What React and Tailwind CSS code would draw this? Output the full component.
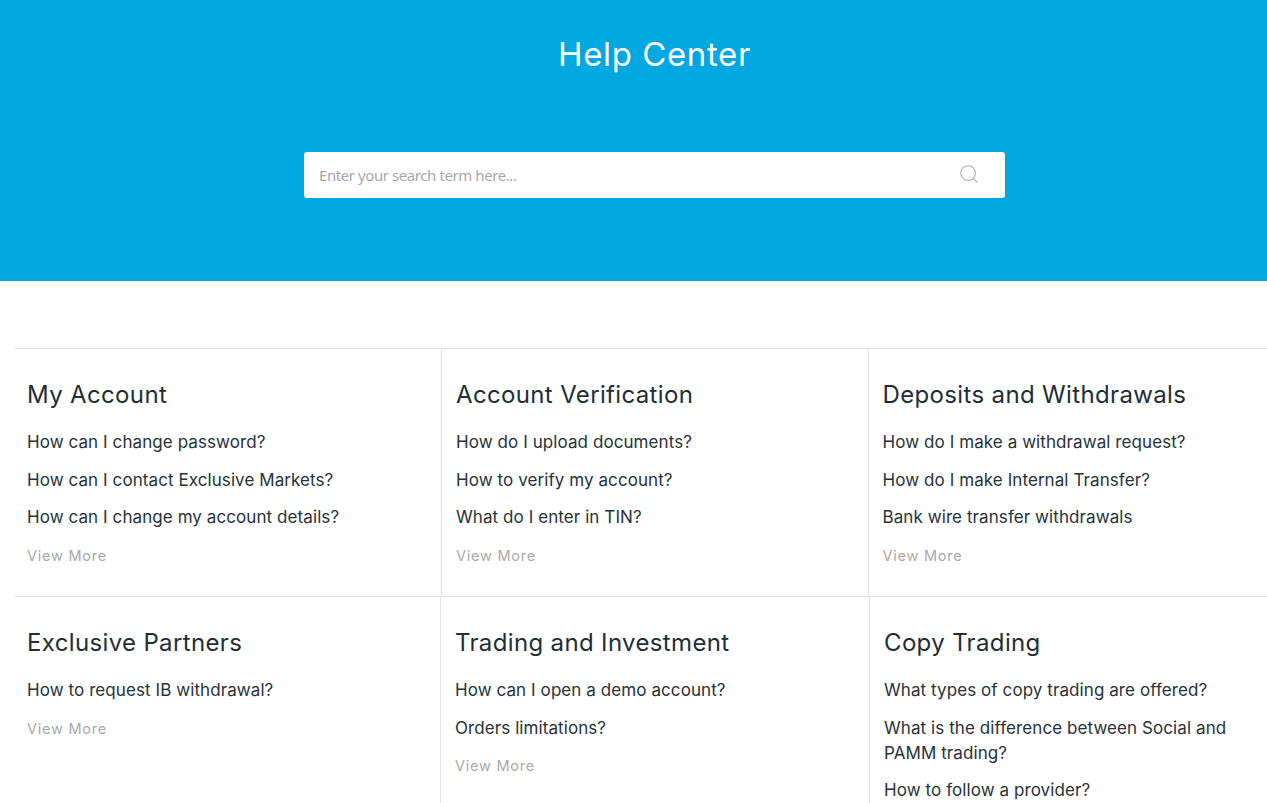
import { Search } from "lucide-react";

const font = "font-['Inter','Liberation_Sans',sans-serif]";

function Card({ title, links, className, more = true }) {
  return (
    <div className={`pt-[31px] ${className}`}>
      <h2 className="text-[24px] leading-[30px] tracking-[0.35px] text-[#1e2e35] font-normal mb-[20px]">{title}</h2>
      <ul className="flex flex-col gap-[12.5px]">
        {links.map((l) => (
          <li key={l} className="text-[17px] leading-[25px] tracking-[0.08px] text-[#263238]">{l}</li>
        ))}
        {more && <li className="text-[14.5px] leading-[25px] tracking-[0.75px] text-[#a9a9a9]">View More</li>}
      </ul>
    </div>
  );
}

export default function App() {
  return (
    <div className={`h-[803px] overflow-hidden bg-white ${font}`}>
      <header className="h-[281px] bg-[#00a7e1] pl-[42px] pt-[33px] flex flex-col items-center">
        <h1 className="text-[33px] leading-[42px] font-normal text-white tracking-[0.6px]">Help Center</h1>
        <div className="mt-[77px] w-[701px] h-[46px] bg-white rounded-[3px] flex items-center justify-between pl-[15px] pr-[25px]">
          <span className="font-['Noto_Sans',sans-serif] text-[15px] tracking-[-0.42px] text-[#a8a8a8] mt-[1px]">Enter your search term here...</span>
          <Search className="w-[22px] h-[22px] text-[#b0b0b0] -mt-[3px]" strokeWidth={1.2} />
        </div>
      </header>
      <main className="mt-[67px] ml-[15px]">
        <div className="grid grid-cols-[427px_426.5px_1fr] h-[248px] border-t border-[#e3e3e3]">
          <Card className="pl-[12px] border-r border-[#e3e3e3]" title="My Account" links={["How can I change password?", "How can I contact Exclusive Markets?", "How can I change my account details?"]} />
          <Card className="pl-[14px] border-r border-[#e3e3e3]" title="Account Verification" links={["How do I upload documents?", "How to verify my account?", "What do I enter in TIN?"]} />
          <Card className="pl-[14px]" title="Deposits and Withdrawals" links={["How do I make a withdrawal request?", "How do I make Internal Transfer?", "Bank wire transfer withdrawals"]} />
        </div>
        <div className="grid grid-cols-[426px_429px_1fr] h-[300px] border-t border-[#e3e3e3]">
          <Card className="pl-[12px] border-r border-[#e3e3e3]" title="Exclusive Partners" links={["How to request IB withdrawal?"]} />
          <Card className="pl-[14px] border-r border-[#e3e3e3]" title="Trading and Investment" links={["How can I open a demo account?", "Orders limitations?"]} />
          <Card className="pl-[14px] pr-[30px]" more={false} title="Copy Trading" links={["What types of copy trading are offered?", "What is the difference between Social and PAMM trading?", "How to follow a provider?"]} />
        </div>
      </main>
    </div>
  );
}
